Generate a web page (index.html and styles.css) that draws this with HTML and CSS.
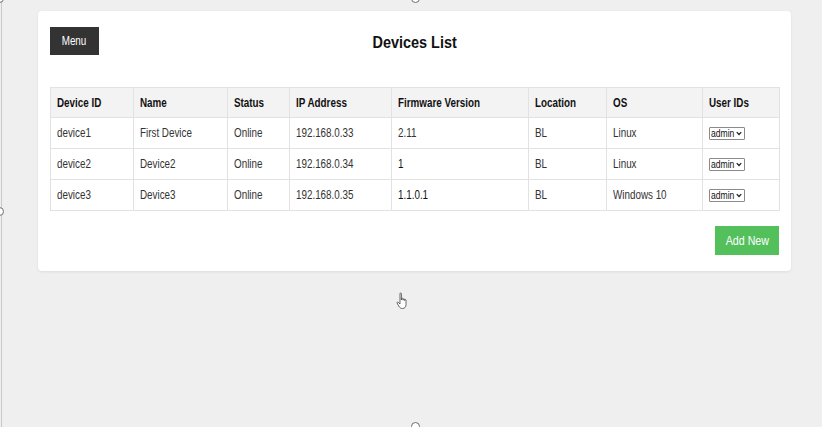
FILE: index.html
```html
<!DOCTYPE html>
<html>
<head>
<meta charset="utf-8">
<link rel="stylesheet" href="styles.css">
</head>
<body>
<div class="frame-line"></div>
<span class="handle h-left"></span>
<span class="handle h-top"></span>
<span class="handle h-bottom"></span>
<span class="handle h-corner"></span>
<main class="card">
  <header class="card-head">
    <button class="menu-btn"><span class="t">Menu</span></button>
    <h1 class="title"><span class="t">Devices List</span></h1>
  </header>
  <table class="devices">
    <thead>
      <tr>
        <th class="c1"><span class="t">Device ID</span></th>
        <th class="c2"><span class="t">Name</span></th>
        <th class="c3"><span class="t">Status</span></th>
        <th class="c4"><span class="t">IP Address</span></th>
        <th class="c5"><span class="t">Firmware Version</span></th>
        <th class="c6"><span class="t">Location</span></th>
        <th class="c7"><span class="t">OS</span></th>
        <th class="c8"><span class="t">User IDs</span></th>
      </tr>
    </thead>
    <tbody>
      <tr>
        <td><span class="t">device1</span></td><td><span class="t">First Device</span></td><td><span class="t">Online</span></td><td><span class="t">192.168.0.33</span></td><td><span class="t">2.11</span></td><td><span class="t">BL</span></td><td><span class="t">Linux</span></td>
        <td><span class="sel"><span class="st">admin</span><svg viewBox="0 0 8 6" width="6" height="5"><path d="M1 1.2 L4 4.4 L7 1.2" fill="none" stroke="#222" stroke-width="1.7"/></svg></span></td>
      </tr>
      <tr>
        <td><span class="t">device2</span></td><td><span class="t">Device2</span></td><td><span class="t">Online</span></td><td><span class="t">192.168.0.34</span></td><td class="dark"><span class="t">1</span></td><td><span class="t">BL</span></td><td><span class="t">Linux</span></td>
        <td><span class="sel"><span class="st">admin</span><svg viewBox="0 0 8 6" width="6" height="5"><path d="M1 1.2 L4 4.4 L7 1.2" fill="none" stroke="#222" stroke-width="1.7"/></svg></span></td>
      </tr>
      <tr>
        <td><span class="t">device3</span></td><td><span class="t">Device3</span></td><td><span class="t">Online</span></td><td><span class="t">192.168.0.35</span></td><td class="dark"><span class="t">1.1.0.1</span></td><td><span class="t">BL</span></td><td><span class="t">Windows 10</span></td>
        <td><span class="sel"><span class="st">admin</span><svg viewBox="0 0 8 6" width="6" height="5"><path d="M1 1.2 L4 4.4 L7 1.2" fill="none" stroke="#222" stroke-width="1.7"/></svg></span></td>
      </tr>
    </tbody>
  </table>
  <div class="actions">
    <button class="add-btn"><span class="t">Add New</span></button>
  </div>
</main>
<svg class="cursor" viewBox="0 0 12 18" width="12" height="18">
  <path d="M4 1.5 C4 0.8 5.4 0.8 5.4 1.5 L5.4 8 L5.6 6.6 C5.8 6 6.9 6 7 6.7 L7.1 8.2 L7.3 7.2 C7.5 6.6 8.5 6.7 8.6 7.3 L8.7 8.6 L8.9 7.9 C9.1 7.4 10 7.5 10 8.1 L10 12.5 C10 15 8.7 16.5 6.5 16.5 C4.6 16.5 3.6 15.6 2.7 14 L1.1 11 C0.8 10.3 1.6 9.8 2.2 10.3 L4 12 Z" fill="#fff" stroke="#444" stroke-width="0.8"/>
</svg>
</body>
</html>
```
FILE: styles.css
```css
html, body {
  margin: 0;
  padding: 0;
}
body {
  background: #efefef;
  width: 822px;
  height: 427px;
  overflow: hidden;
  position: relative;
  font-family: "Liberation Sans", Arial, sans-serif;
  color: #333;
  padding: 11px 31px 0 38px;
  box-sizing: border-box;
}
.t {
  display: inline-block;
  transform: scaleX(0.82);
  transform-origin: left center;
}
.frame-line {
  position: absolute;
  left: 1px;
  top: 0;
  bottom: 0;
  width: 1px;
  background: #c9c9c9;
}
.handle {
  position: absolute;
  width: 9px;
  height: 9px;
  border-radius: 50%;
  border: 1px solid #6e6e6e;
  background: #fff;
  box-sizing: border-box;
}
.h-left { left: -5px; top: 207px; }
.h-top { left: 411px; top: -6px; }
.h-bottom { left: 411px; top: 422px; }
.h-corner { left: -5px; top: -6px; }
.cursor {
  position: absolute;
  left: 396px;
  top: 292px;
}
.card {
  width: 753px;
  background: #fff;
  border-radius: 4px;
  box-shadow: 0 1px 3px rgba(0,0,0,0.08);
  padding: 16px 12px 16px 12px;
  box-sizing: border-box;
}
.card-head {
  display: grid;
  grid-template-columns: 1fr auto 1fr;
  align-items: center;
  height: 28px;
}
.menu-btn {
  justify-self: start;
  width: 49px;
  height: 28px;
  background: #333;
  color: #fff;
  border: none;
  font-family: inherit;
  font-size: 12px;
  padding: 0;
  border-radius: 0;
}
.menu-btn .t, .add-btn .t, .title .t {
  transform-origin: center center;
}
.title {
  margin: 0;
  font-size: 17px;
  font-weight: bold;
  color: #111;
  grid-column: 2;
  position: relative;
  top: 2px;
}
.title .t { transform: scaleX(0.85); }
.devices {
  margin-top: 32px;
  width: 729px;
  border-collapse: collapse;
  table-layout: fixed;
  font-size: 12px;
}
.devices th, .devices td {
  border: 1px solid #e2e2e2;
  text-align: left;
  padding: 0 6px;
  white-space: nowrap;
}
.devices th {
  height: 29px;
  background: #f3f3f3;
  font-weight: bold;
  color: #111;
}
.devices td {
  height: 30px;
  color: #333;
}
.devices td.dark { color: #111; }
.c1 { width: 70px; }
.c2 { width: 81px; }
.c3 { width: 49px; }
.c4 { width: 89px; }
.c5 { width: 124px; }
.c6 { width: 65px; }
.c7 { width: 83px; }
.c8 { width: 64px; }
.sel {
  display: inline-flex;
  align-items: center;
  border: 1px solid #8a8a8a;
  border-radius: 1px;
  color: #111;
  padding: 0 2px 0 1px;
  height: 13px;
  width: 36px;
  box-sizing: border-box;
  justify-content: space-between;
  vertical-align: middle;
}
.st {
  display: inline-block;
  font-size: 11px;
  line-height: 11px;
  transform: scaleX(0.78);
  transform-origin: left center;
  width: 24px;
}
.actions {
  display: flex;
  justify-content: flex-end;
  margin-top: 15px;
}
.add-btn {
  width: 64px;
  height: 29px;
  background: #54c05c;
  color: #fff;
  border: none;
  font-family: inherit;
  font-size: 13px;
  padding: 0;
  border-radius: 0;
}
```
